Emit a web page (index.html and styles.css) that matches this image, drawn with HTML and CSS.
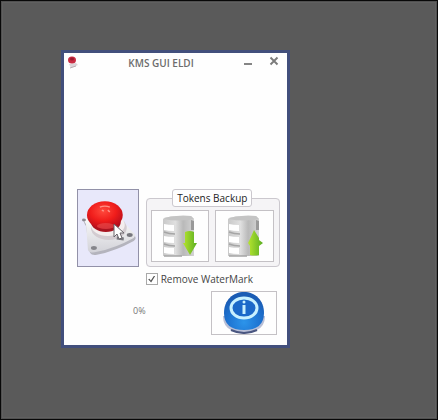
FILE: index.html
```html
<!DOCTYPE html>
<html lang="en">
<head>
<meta charset="utf-8">
<title>KMS GUI ELDI</title>
<link rel="stylesheet" href="styles.css">
</head>
<body>
<main class="desktop">
  <section class="window">
    <header class="titlebar">
      <svg class="app-icon" viewBox="0 0 12 13" aria-hidden="true">
        <path d="M2 8l7-1 2 2-7 3z" fill="#dcd5d9"/>
        <path d="M3 12l6-2" stroke="#b9aeb3" stroke-width="1"/>
        <ellipse cx="5" cy="4" rx="4" ry="3.500" fill="#c92c42"/>
        <ellipse cx="5" cy="3" rx="2" ry="1.500" fill="#9c1c30"/>
      </svg>
      <h1 class="title">KMS GUI ELDI</h1>
      <button class="caption minimize" type="button" aria-label="Minimize">
        <svg viewBox="0 0 10 10"><path d="M1 5h8" stroke="#858585" stroke-width="2"/></svg>
      </button>
      <button class="caption close" type="button" aria-label="Close">
        <svg viewBox="0 0 10 10"><path d="M1.500 1.500l7 7M8.500 1.500l-7 7" stroke="#7b7b7b" stroke-width="1.900"/></svg>
      </button>
    </header>
    <div class="controls">
      <button class="tile activate" type="button" aria-label="Activate">
        <svg class="art" viewBox="0 0 60 75">
          <defs>
            <radialGradient id="dome" cx=".45" cy=".35" r=".65">
              <stop offset="0" stop-color="#ff4a3d"/>
              <stop offset=".55" stop-color="#f01d1b"/>
              <stop offset="1" stop-color="#b90d1c"/>
            </radialGradient>
            <linearGradient id="plate" x1="0" y1="0" x2="0" y2="1">
              <stop offset="0" stop-color="#fafafa"/>
              <stop offset="1" stop-color="#d2d2d8"/>
            </linearGradient>
          </defs>
          <path d="M6 28Q5 31 8 35L12 62Q14 65 19 64Q38 60 56 50Q60 47 56 44L44 31z" fill="#b4b4bd"/>
          <path d="M6 27Q5 29 8 33L10 59Q12 63 19 61Q38 57 56 47Q59 44 55 41L44 29z" fill="url(#plate)"/>
          <ellipse cx="31" cy="37" rx="18" ry="12" fill="#d3ccd1"/>
          <ellipse cx="30" cy="34" rx="17" ry="11" fill="#f4eeee"/>
          <ellipse cx="28" cy="31" rx="15" ry="10" fill="#a91420"/>
          <ellipse cx="27" cy="24" rx="18" ry="14" fill="url(#dome)"/>
          <ellipse cx="28" cy="35" rx="9" ry="3" fill="#e95050" opacity=".6"/>
          <path d="M22 16q5-2 10 0M24 19l2 1m4-1l2 2" fill="none" stroke="#ff9186" stroke-width="1.500"/>
          <ellipse cx="6" cy="29" rx="2" ry="1.500" fill="#8d8990"/>
          <ellipse cx="16" cy="57" rx="3" ry="2" fill="#85858b"/>
          <ellipse cx="52" cy="44" rx="3" ry="2" fill="#77777e"/>
          <path d="M39 47l7 1" stroke="#77777e" stroke-width="3"/>
        </svg>
        <svg class="cursor" viewBox="0 0 12 17" aria-hidden="true">
          <path d="M1 1v13l3-3 2 5 3-1-2-5h4z" fill="#fff" stroke="#68646a" stroke-width="1"/>
        </svg>
      </button>
      <fieldset class="tokens">
        <legend class="tokens-title">Tokens Backup</legend>
        <button class="tile" type="button" aria-label="Save tokens">
          <svg class="server" viewBox="0 0 36 42">
            <defs>
              <linearGradient id="metal">
                <stop offset="0" stop-color="#c9c9c9"/>
                <stop offset=".4" stop-color="#e0e0e0"/>
                <stop offset=".65" stop-color="#b9b9b9"/>
                <stop offset="1" stop-color="#d4d4d4"/>
              </linearGradient>
              <linearGradient id="leaf">
                <stop offset="0" stop-color="#b7e52f"/>
                <stop offset="1" stop-color="#5aae22"/>
              </linearGradient>
            </defs>
            <g id="rack">
              <path d="M1 4Q8 0 29 1l3 3v37H1z" fill="url(#metal)"/>
              <path d="M1 4Q8 0 29 1l3 3Q17 7 1 4z" fill="#c4c4c4"/>
              <path d="M29 5l3 1v9h-3z" fill="#999"/>
              <path d="M2 9q4 1 10 1v6q-6 0-10-1zM2 21q4 1 10 1v6q-6 0-10-1zM2 32q4 1 10 1v6q-6 0-10-1z" fill="#fff"/>
              <path d="M2 17q5 2 11 2M2 29q5 2 11 2M2 41h18" fill="none" stroke="#a5a5a5" stroke-width="1.500"/>
            </g>
            <path d="M23 17q5-2 9 0v11h3l-7 12-7-12h2z" fill="url(#leaf)"/>
          </svg>
        </button>
        <button class="tile" type="button" aria-label="Restore tokens">
          <svg class="server" viewBox="0 0 36 42">
            <use href="#rack"/>
            <path d="M27 15l5 8v2l4 3-4 3v9q-5 1-9 0v-9l-2-3 2-4z" fill="url(#leaf)"/>
          </svg>
        </button>
      </fieldset>
      <label class="option"><input class="check" type="checkbox" checked>Remove WaterMark</label>
      <output class="progress">0%</output>
      <button class="tile about" type="button" aria-label="About">
        <svg class="info" viewBox="0 0 44 42">
          <defs>
            <radialGradient id="blue" cx=".5" cy=".8" r=".7">
              <stop offset="0" stop-color="#2c94ea"/>
              <stop offset=".6" stop-color="#1d72d0"/>
              <stop offset="1" stop-color="#1a5cb4"/>
            </radialGradient>
          </defs>
          <path d="M1 24Q1 34 9 38q13 7 26 0 8-4 8-14z" fill="#b9bfd6"/>
          <path d="M9 38q13 6 26 0" fill="none" stroke="#4a5680" stroke-width="2"/>
          <path d="M22 0C33 0 42 8 42 21q0 17-20 17T2 21C2 8 11 0 22 0z" fill="url(#blue)"/>
          <ellipse cx="22" cy="16" rx="13" ry="10" fill="#1b69c9" stroke="#c8f1ff" stroke-width="3"/>
          <path d="M22 13v9" stroke="#c8f1ff" stroke-width="3"/>
          <circle cx="22" cy="10" r="1.500" fill="#c8f1ff"/>
        </svg>
      </button>
    </div>
  </section>
</main>
</body>
</html>
```

FILE: styles.css
```css
* {
  box-sizing: border-box;
}

body {
  margin: 0;
  font-family: "Open Sans", "Noto Sans", sans-serif;
  font-size: 10px;
  line-height: 14px;
  color: #444;
}

.desktop {
  min-height: 100vh;
  padding: 49px 147px 71px 60px;
  background: #5a5a5a;
  border: 1px solid #080808;
  box-shadow: inset 0 0 0 1px #505050, inset 0 0 0 2px #606060;
}

.window {
  background: #fefefe;
  border: 3px solid #424f7c;
}

.titlebar {
  display: grid;
  grid-template-columns: 12px 1fr 10px 10px;
  column-gap: 16px;
  padding: 3px 8px 0 3px;
}

.app-icon {
  width: 12px;
  height: 13px;
}

.title {
  margin: 0;
  font-size: 10px;
  font-weight: 600;
  line-height: 15px;
  text-align: center;
  color: #6c6c6c;
}

.caption {
  display: flex;
  width: 10px;
  height: 10px;
  padding: 0;
  background: none;
  border: 0;
}

.minimize {
  align-self: center;
}

.controls {
  display: grid;
  grid-template-columns: 62fr 135fr;
  column-gap: 7px;
  padding: 118px 7px 10px 13px;
}

.tile {
  display: flex;
  align-items: center;
  justify-content: center;
  min-width: 0;
  padding: 0;
  background: #fefefe;
  border: 1px solid #c4c1c5;
}

.activate {
  position: relative;
  height: 78px;
  background: #e8e8fa;
  border: 1px solid #9291a8;
}

.art {
  width: 60px;
  height: 75px;
}

.cursor {
  position: absolute;
  top: 33px;
  left: 35px;
  width: 12px;
  height: 17px;
}

.tokens {
  display: grid;
  grid-template-columns: 1fr 1fr;
  gap: 6px;
  min-width: 0;
  margin: 0;
  padding: 3px 5px 4px 4px;
  background: #f5f4f6;
  border: 1px solid #cbc8ce;
  border-radius: 4px;
}

.tokens-title {
  margin: 0 auto;
  padding: 1px 4px;
  color: #222;
  background: #fefefe;
  border: 1px solid #cbc8ce;
  border-radius: 3px;
}

.server {
  width: 36px;
  height: 42px;
}

.option {
  grid-column: 2;
  display: flex;
  align-items: center;
  gap: 3px;
  padding-top: 5px;
  white-space: nowrap;
}

.check {
  display: grid;
  place-items: center;
  width: 12px;
  height: 12px;
  margin: 0;
  appearance: none;
  background: #fefefe;
  border: 1px solid #a9a9a9;
}

.check:checked::after {
  content: "";
  width: 7px;
  height: 7px;
  background: #555;
  clip-path: polygon(0 55%, 18% 45%, 38% 70%, 85% 0, 100% 8%, 42% 100%);
}

.progress {
  grid-column: 1 / 3;
  grid-row: 3;
  justify-self: start;
  align-self: center;
  padding-left: 56px;
  font-size: 9px;
  color: #777;
}

.about {
  grid-column: 2;
  grid-row: 3;
  justify-self: end;
  width: 66px;
  height: 44px;
  margin: 5px 3px 0 0;
}

.info {
  width: 44px;
  height: 42px;
}
```
